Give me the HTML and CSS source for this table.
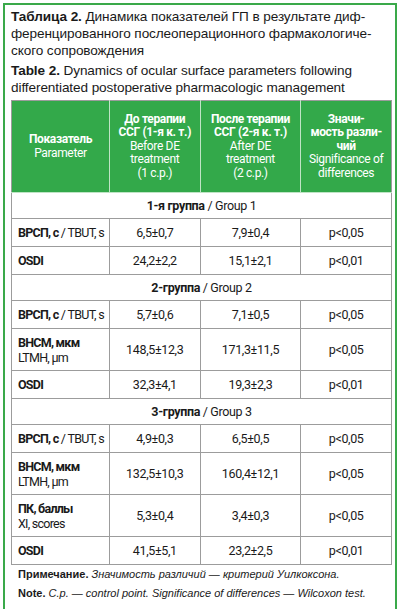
FILE: index.html
```html
<!DOCTYPE html>
<html lang="ru">
<head>
  <meta charset="UTF-8" />
  <meta name="viewport" content="width=device-width, initial-scale=1.0"/>
  <title>Таблица 2</title>
  <link rel="stylesheet" href="styles.css">
</head>
<body>
  <div class="frame">
    <p class="caption ru"><b>Таблица 2.</b> Динамика показателей ГП в результате диф-<br>ференцированного послеоперационного фармакологиче-<br>ского сопровождения</p>
    <p class="caption en"><b>Table 2.</b> Dynamics of ocular surface parameters following<br>differentiated postoperative pharmacologic management</p>

    <table class="data">
      <colgroup>
        <col class="c1"><col class="c2"><col class="c3"><col class="c4">
      </colgroup>
      <thead>
        <tr>
          <th><b>Показатель</b><br>Parameter</th>
          <th><b>До терапии<br>ССГ (1-я к. т.)</b><br>Before DE<br>treatment<br>(1 c.p.)</th>
          <th><b>После терапии<br>ССГ (2-я к. т.)</b><br>After DE<br>treatment<br>(2 c.p.)</th>
          <th><b>Значи-<br>мость разли-<br>чий</b><br>Significance of<br>differences</th>
        </tr>
      </thead>
      <tbody>
        <tr class="group"><td colspan="4"><b>1-я группа</b> / Group 1</td></tr>
        <tr class="row"><td class="label"><b>ВРСП, с</b> / TBUT, s</td><td>6,5±0,7</td><td>7,9±0,4</td><td>p&lt;0,05</td></tr>
        <tr class="row"><td class="label"><b>OSDI</b></td><td>24,2±2,2</td><td>15,1±2,1</td><td>p&lt;0,01</td></tr>

        <tr class="group"><td colspan="4"><b>2-группа</b> / Group 2</td></tr>
        <tr class="row"><td class="label"><b>ВРСП, с</b> / TBUT, s</td><td>5,7±0,6</td><td>7,1±0,5</td><td>p&lt;0,05</td></tr>
        <tr class="row double"><td class="label"><b>ВНСМ, мкм</b><br>LTMH, µm</td><td>148,5±12,3</td><td>171,3±11,5</td><td>p&lt;0,05</td></tr>
        <tr class="row"><td class="label"><b>OSDI</b></td><td>32,3±4,1</td><td>19,3±2,3</td><td>p&lt;0,01</td></tr>

        <tr class="group"><td colspan="4"><b>3-группа</b> / Group 3</td></tr>
        <tr class="row"><td class="label"><b>ВРСП, с</b> / TBUT, s</td><td>4,9±0,3</td><td>6,5±0,5</td><td>p&lt;0,05</td></tr>
        <tr class="row double"><td class="label"><b>ВНСМ, мкм</b><br>LTMH, µm</td><td>132,5±10,3</td><td>160,4±12,1</td><td>p&lt;0,05</td></tr>
        <tr class="row double"><td class="label"><b>ПК, баллы</b><br>XI, scores</td><td>5,3±0,4</td><td>3,4±0,3</td><td>p&lt;0,05</td></tr>
        <tr class="row"><td class="label"><b>OSDI</b></td><td>41,5±5,1</td><td>23,2±2,5</td><td>p&lt;0,01</td></tr>
      </tbody>
    </table>

    <p class="note"><b>Примечание.</b> <i>Значимость различий — критерий Уилкоксона.</i></p>
    <p class="note"><b>Note.</b> <i>C.p. — control point. Significance of differences — Wilcoxon test.</i></p>
  </div>
</body>
</html>
```

FILE: styles.css
```css
body {
  margin: 0;
  background: #fff;
  color: #1a1a1a;
  font-family: 'Liberation Sans', Arial, sans-serif;
}

.frame {
  margin: 3px 5px 0 3px;
  border: 2px solid #3aa94a;
  border-bottom: none;
  height: 606px;
  box-sizing: border-box;
  padding: 3px 5px 0 6px;
}

.caption {
  margin: 0;
  font-size: 13.6px;
  line-height: 17px;
  letter-spacing: -0.1px;
}

.caption.en {
  margin-top: 3px;
  margin-bottom: 4px;
}

.data {
  width: 381px;
  border-collapse: collapse;
  font-family: Roboto, 'Liberation Sans', sans-serif;
  font-size: 12.5px;
  letter-spacing: -0.35px;
  color: #1a1a1a;
}

.c1 { width: 98px; }
.c2 { width: 91px; }
.c3 { width: 101px; }
.c4 { width: 91px; }

.data th,
.data td {
  border: 1px solid #9c9c9c;
  text-align: center;
  vertical-align: middle;
  padding: 0;
  white-space: nowrap;
}

.data th {
  background: #33a94a;
  color: #fff;
  font-size: 12px;
  font-weight: normal;
  line-height: 13.4px;
  height: 91px;
  border-color: #bfe4c5;
  border-top-color: #9c9c9c;
}

.data th:first-child { border-left-color: #9c9c9c; }
.data th:last-child { border-right-color: #9c9c9c; }

.group td { height: 25px; }

.row td { height: 27px; }

.row.double td {
  height: 41px;
  line-height: 15px;
}

.data td.label {
  text-align: left;
  padding-left: 6px;
  letter-spacing: -0.75px;
}

.note {
  margin: 0;
  padding-left: 7px;
  font-size: 11px;
  line-height: 19px;
}

.note:first-of-type { margin-top: 0; }
```
